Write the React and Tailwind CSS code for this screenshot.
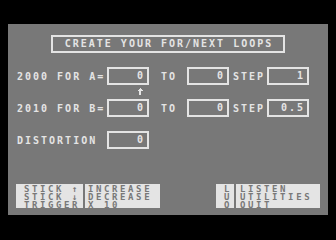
import React from 'react';

const txt = "font-['DejaVu_Sans_Mono',monospace] font-bold text-[10px] tracking-[2px] uppercase";

const ValueBox = ({ value }) => (
  <div className="w-[42px] h-[18px] border-2 border-[#e4e4e4] flex items-center justify-end pr-[2px] leading-none">
    <span>{value}</span>
  </div>
);

const LoopRow = ({ label, from, to, step }) => (
  <div className="flex items-center h-[18px]">
    <span className="ml-[9px] w-[90px]">{label}</span>
    <ValueBox value={from} />
    <span className="ml-[12px] w-[26px]">TO</span>
    <ValueBox value={to} />
    <span className="ml-[4px] w-[34px]">STEP</span>
    <ValueBox value={step} />
  </div>
);

const UpArrow = () => (
  <svg width="6" height="7" viewBox="0 0 6 7" className="block">
    <polygon points="3,0 6,3 4,3 4,7 2,7 2,3 0,3" fill="#e4e4e4" shapeRendering="crispEdges" />
  </svg>
);

const HelpColumn = ({ lines, className }) => (
  <div className={`h-[24px] bg-[#e4e4e4] pt-[0.5px] flex flex-col text-[9px] tracking-[2.6px] ${className}`}>
    {lines.map((line) => (
      <span key={line} className="h-[8px] leading-[8px] whitespace-pre">{line}</span>
    ))}
  </div>
);

const App = () => {
  return (
    <div className={`w-[336px] h-[240px] bg-black pt-[24px] pl-[8px] ${txt}`}>
      <div className="w-[320px] h-[191px] bg-[#787878] text-[#e4e4e4] flex flex-col">
        {/* Title */}
        <div className="ml-[43px] mt-[11px] w-[234px] h-[18px] border-2 border-[#e4e4e4] flex items-center justify-center pl-[2px] leading-none">
          CREATE YOUR FOR/NEXT LOOPS
        </div>

        {/* Loop rows */}
        <div className="mt-[14px]">
          <LoopRow label="2000 FOR A=" from="0" to="0" step="1" />
        </div>
        <div className="h-[14px] pl-[129px] pt-[3px]">
          <UpArrow />
        </div>
        <LoopRow label="2010 FOR B=" from="0" to="0" step="0.5" />

        <div className="mt-[14px] flex items-center h-[18px]">
          <span className="ml-[9px] w-[90px]">DISTORTION</span>
          <ValueBox value="0" />
        </div>

        {/* Key help */}
        <div className="mt-[35px] flex text-[#787878]">
          <div className="ml-[8px] flex gap-[2px]">
            <HelpColumn className="w-[67px] pl-[8px]" lines={['STICK ↑', 'STICK ↓', 'TRIGGER']} />
            <HelpColumn className="w-[75px] pl-[3px]" lines={['INCREASE', 'DECREASE', 'X 10']} />
          </div>
          <div className="ml-[56px] flex gap-[2px]">
            <HelpColumn className="w-[18px] pl-[8px]" lines={['L', 'U', 'Q']} />
            <HelpColumn className="w-[84px] pl-[4px]" lines={['LISTEN', 'UTILITIES', 'QUIT']} />
          </div>
        </div>
      </div>
    </div>
  );
};

export default App;
